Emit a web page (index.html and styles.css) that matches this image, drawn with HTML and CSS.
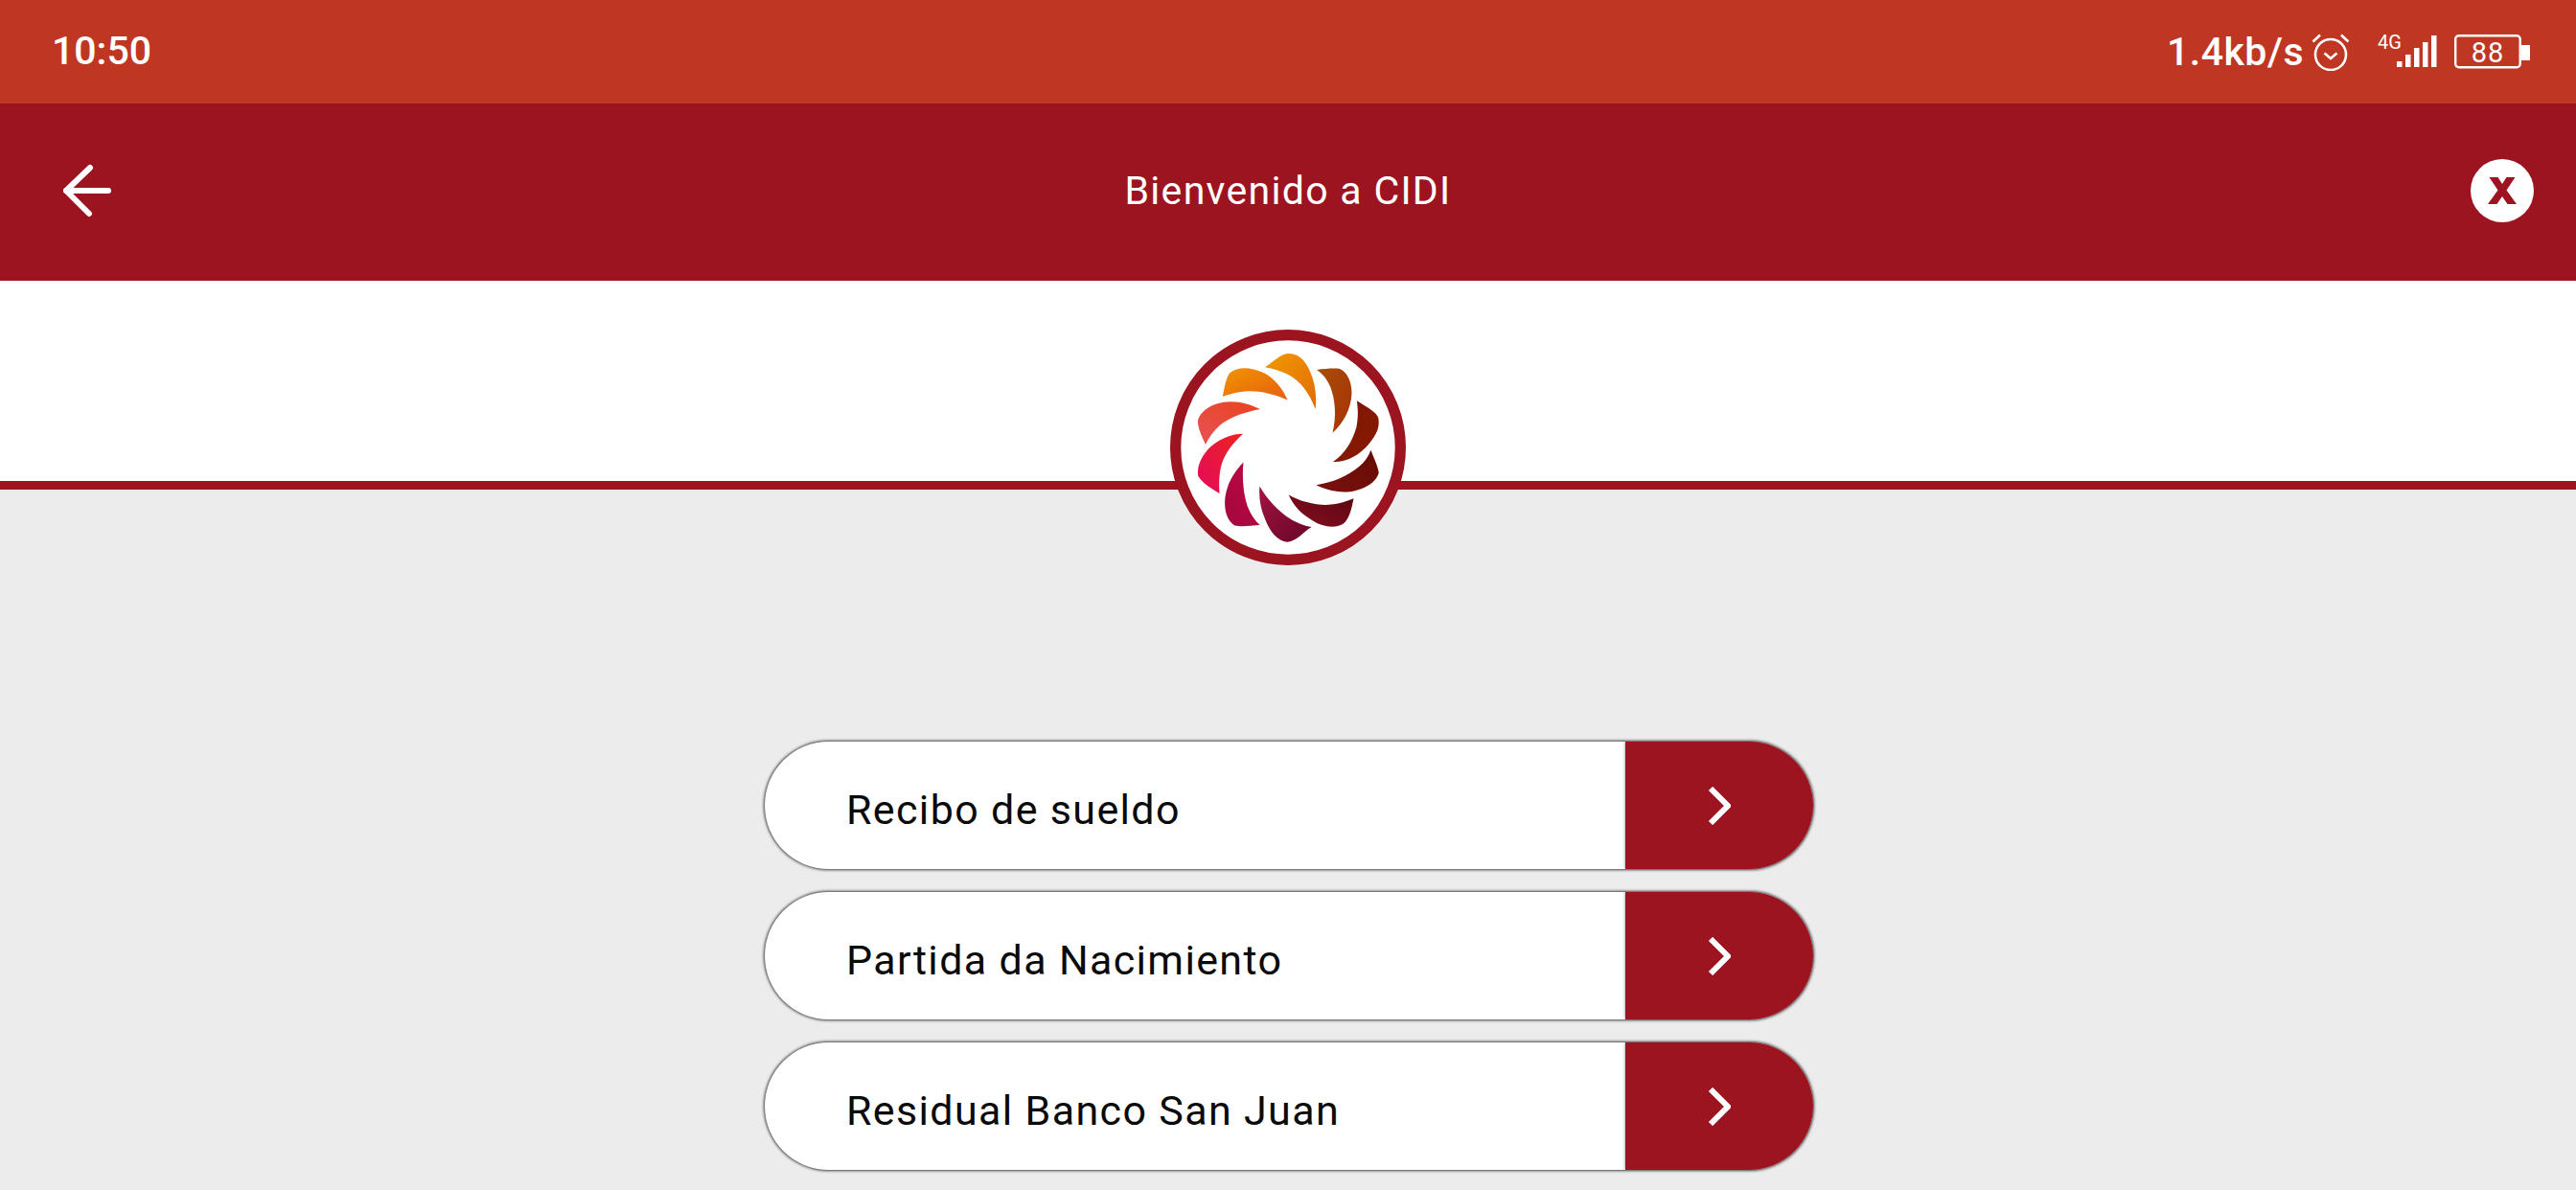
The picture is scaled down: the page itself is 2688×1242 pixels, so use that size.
FILE: index.html
```html
<!DOCTYPE html>
<html lang="es">
<head>
<meta charset="utf-8">
<title>Bienvenido a CIDI</title>
<link rel="stylesheet" href="styles.css">
</head>
<body>
<div class="screen">
  <div class="status">
    <span class="time">10:50</span>
    <div class="status-right">
      <span class="speed">1.4kb/s</span>
      <svg class="alarm" width="40" height="40" viewBox="0 0 40 40" fill="none" stroke="#fff" stroke-width="2.6">
        <circle cx="20" cy="23" r="16"/>
        <path d="M13.5 21.5 20 27l6.500-5.500"/>
        <path d="M1.500 9.500 9 2.500M38.500 9.500 31 2.500"/>
      </svg>
      <svg class="signal" width="62" height="48" viewBox="0 -6 62 48">
        <text x="0" y="15" class="net">4G</text>
        <rect x="20" y="28" width="5.500" height="6" fill="#fff"/>
        <rect x="29" y="21" width="5.500" height="13" fill="#fff"/>
        <rect x="38" y="14" width="5.500" height="20" fill="#fff"/>
        <rect x="47" y="8" width="5.500" height="26" fill="#fff"/>
        <rect x="56" y="1" width="5.500" height="33" fill="#fff"/>
      </svg>
      <svg class="battery" width="79" height="36" viewBox="0 0 79 36">
        <rect x="1.200" y="1.200" width="67.500" height="33" rx="3.500" fill="none" stroke="#fff" stroke-width="2.400"/>
        <rect x="70" y="11" width="9" height="16" fill="#fff"/>
        <text x="35" y="28.500" text-anchor="middle" class="batt">88</text>
      </svg>
    </div>
  </div>

  <header class="appbar">
    <svg class="back" width="52" height="56" viewBox="0 0 52 56" fill="none" stroke="#fff" stroke-width="6" stroke-linecap="round" stroke-linejoin="round">
      <path d="M3 28H47"/>
      <path d="M28 4 3 28 27 52"/>
    </svg>
    <h1 class="title">Bienvenido a CIDI</h1>
    <div class="close">
      <svg width="30" height="28" viewBox="0 0 30 28">
        <path d="M1.500 0H10.500L15 7 19.500 0H28.500L19.500 13.500 30 28H20.500L15 20 9.500 28H0L10.500 13.500Z" fill="#9d1421"/>
      </svg>
    </div>
  </header>

  <div class="band">
    <div class="logo">
      <svg width="246" height="246" viewBox="122 70 740 740">
        <defs>
          <linearGradient id="g1" x1="0" y1="0" x2="1" y2="1"><stop offset="0" stop-color="#f09a00"/><stop offset="1" stop-color="#e36a06"/></linearGradient>
          <linearGradient id="g2" x1="0" y1="0" x2="1" y2="1"><stop offset="0" stop-color="#a74e08"/><stop offset="1" stop-color="#a83205"/></linearGradient>
          <linearGradient id="g3" x1="0" y1="0" x2="1" y2="1"><stop offset="0" stop-color="#7f1603"/><stop offset="1" stop-color="#861903"/></linearGradient>
          <linearGradient id="g4" x1="1" y1="0" x2="0" y2="1"><stop offset="0" stop-color="#640c04"/><stop offset="1" stop-color="#7c1010"/></linearGradient>
          <linearGradient id="g5" x1="1" y1="0" x2="0" y2="1"><stop offset="0" stop-color="#5e0512"/><stop offset="1" stop-color="#84101f"/></linearGradient>
          <linearGradient id="g6" x1="1" y1="1" x2="0" y2="0"><stop offset="0" stop-color="#660728"/><stop offset="1" stop-color="#a2123f"/></linearGradient>
          <linearGradient id="g7" x1="0" y1="1" x2="1" y2="0"><stop offset="0" stop-color="#a3063f"/><stop offset="1" stop-color="#bf0a41"/></linearGradient>
          <linearGradient id="g8" x1="0" y1="1" x2="1" y2="0"><stop offset="0" stop-color="#e50a5c"/><stop offset="1" stop-color="#ea2320"/></linearGradient>
          <linearGradient id="g9" x1="0" y1="1" x2="1" y2="0"><stop offset="0" stop-color="#e85256"/><stop offset="1" stop-color="#e9431d"/></linearGradient>
          <linearGradient id="g10" x1="0" y1="0" x2="1" y2="1"><stop offset="0" stop-color="#f09500"/><stop offset="1" stop-color="#e85d12"/></linearGradient>
        </defs>
        <circle cx="492" cy="440" r="353" fill="#fff" stroke="#9d1421" stroke-width="34"/>
        <path fill="url(#g1)" d="M420 188C450 168 470 145 495 145C530 145 555 175 570 225C580 260 582 295 578 320C560 270 530 230 490 210C470 200 445 192 420 188Z"/>
        <path fill="url(#g2)" d="M582 196C610 192 640 190 655 193C680 205 692 235 692 270C690 320 665 365 632 394C645 340 640 290 625 250C615 225 600 208 582 196Z"/>
        <path fill="url(#g3)" d="M708 293C735 310 765 325 775 345C782 375 770 400 745 430C715 465 675 487 633 485C670 460 695 420 707 375C713 345 712 320 708 293Z"/>
        <path fill="url(#g4)" d="M752 448C762 475 775 500 777 520C770 545 745 565 705 575C665 585 620 578 580 558C630 550 680 530 715 500C733 485 745 468 752 448Z"/>
        <path fill="url(#g5)" d="M698 600C692 630 685 665 665 680C640 695 600 690 570 670C535 650 510 625 494 589C530 610 580 622 620 620C650 618 675 610 698 600Z"/>
        <path fill="url(#g6)" d="M566 690C540 705 520 735 490 737C460 735 435 705 420 665C405 630 400 595 403 562C425 600 460 640 500 665C520 677 545 687 566 690Z"/>
        <path fill="url(#g7)" d="M404 684C375 686 345 690 325 685C300 670 290 635 295 595C302 550 325 515 352 487C348 530 350 580 365 625C375 650 388 670 404 684Z"/>
        <path fill="url(#g8)" d="M277 585C255 570 225 555 210 530C205 500 220 465 250 437C280 412 315 397 351 397C320 425 295 455 283 495C275 525 275 555 277 585Z"/>
        <path fill="url(#g9)" d="M233 431C222 405 208 380 209 355C218 325 250 305 290 298C330 292 370 302 405 320C360 328 320 342 285 365C262 382 245 405 233 431Z"/>
        <path fill="url(#g10)" d="M287 280C292 255 297 220 310 205C335 185 375 187 415 205C450 222 475 255 491 291C450 272 405 262 365 263C335 265 310 272 287 280Z"/>
      </svg>
    </div>
  </div>

  <main class="content">
    <a class="item">
      <span class="item-label">Recibo de sueldo</span>
      <span class="item-go"><svg width="24" height="40" viewBox="0 0 24 40" fill="none" stroke="#fff" stroke-width="6"><path d="M3 2 21 20 3 38"/></svg></span>
    </a>
    <a class="item">
      <span class="item-label">Partida da Nacimiento</span>
      <span class="item-go"><svg width="24" height="40" viewBox="0 0 24 40" fill="none" stroke="#fff" stroke-width="6"><path d="M3 2 21 20 3 38"/></svg></span>
    </a>
    <a class="item">
      <span class="item-label">Residual Banco San Juan</span>
      <span class="item-go"><svg width="24" height="40" viewBox="0 0 24 40" fill="none" stroke="#fff" stroke-width="6"><path d="M3 2 21 20 3 38"/></svg></span>
    </a>
  </main>
</div>
</body>
</html>
```

FILE: styles.css
```css
* { box-sizing: border-box; }
html, body { margin: 0; padding: 0; }
body { font-family: Roboto, sans-serif; background: #ececec; }
.screen { width: 2688px; height: 1242px; overflow: hidden; display: flex; flex-direction: column; position: relative; }

.status { height: 108px; flex: none; background: #bf3722; color: #fff; display: flex; align-items: center; justify-content: space-between; padding: 0 48px 0 54px; font-weight: 500; }
.time { font-size: 41px; line-height: 1; margin-bottom: 1px; }
.status-right { display: flex; align-items: center; }
.speed { font-size: 41px; line-height: 1; letter-spacing: 0.5px; }
.alarm { margin-left: 8px; }
.signal { margin-left: 29px; }
.battery { margin-left: 18px; }
.net { font: 400 20px Roboto, sans-serif; fill: #fff; }
.batt { font: 400 29px Roboto, sans-serif; fill: #fff; letter-spacing: 1px; }

.appbar { height: 185px; flex: none; background: #9d1421; display: flex; align-items: center; justify-content: space-between; padding: 0 44px 4px 66px; position: relative; }
.title { position: absolute; left: 0; right: 0; margin: 0; text-align: center; color: #fff; font-size: 41px; font-weight: 400; letter-spacing: 1.3px; }
.close { width: 66px; height: 66px; border-radius: 50%; background: #fff; display: flex; align-items: center; justify-content: center; }

.band { height: 218px; flex: none; background: #fff; border-bottom: 9px solid #9d1421; position: relative; }
.logo { position: absolute; left: 1221px; top: 51px; width: 246px; height: 246px; }
.logo svg { display: block; }

.content { display: flex; flex-direction: column; align-items: center; gap: 24px; padding-top: 263px; padding-left: 2px; }
.item { width: 1094px; height: 133px; flex: none; border-radius: 67px; background: #fff; display: flex; overflow: hidden; box-shadow: 0 0 3px 1px rgba(0,0,0,.75); }
.item-label { flex: 1; display: flex; align-items: center; padding-left: 85px; padding-top: 9px; font-size: 43px; font-weight: 400; color: #0a0a0a; letter-spacing: 1.35px; }
.item-go { width: 196px; flex: none; background: #9d1421; display: flex; align-items: center; justify-content: center; box-shadow: 0 0 3px rgba(0,0,0,.5); }
```
